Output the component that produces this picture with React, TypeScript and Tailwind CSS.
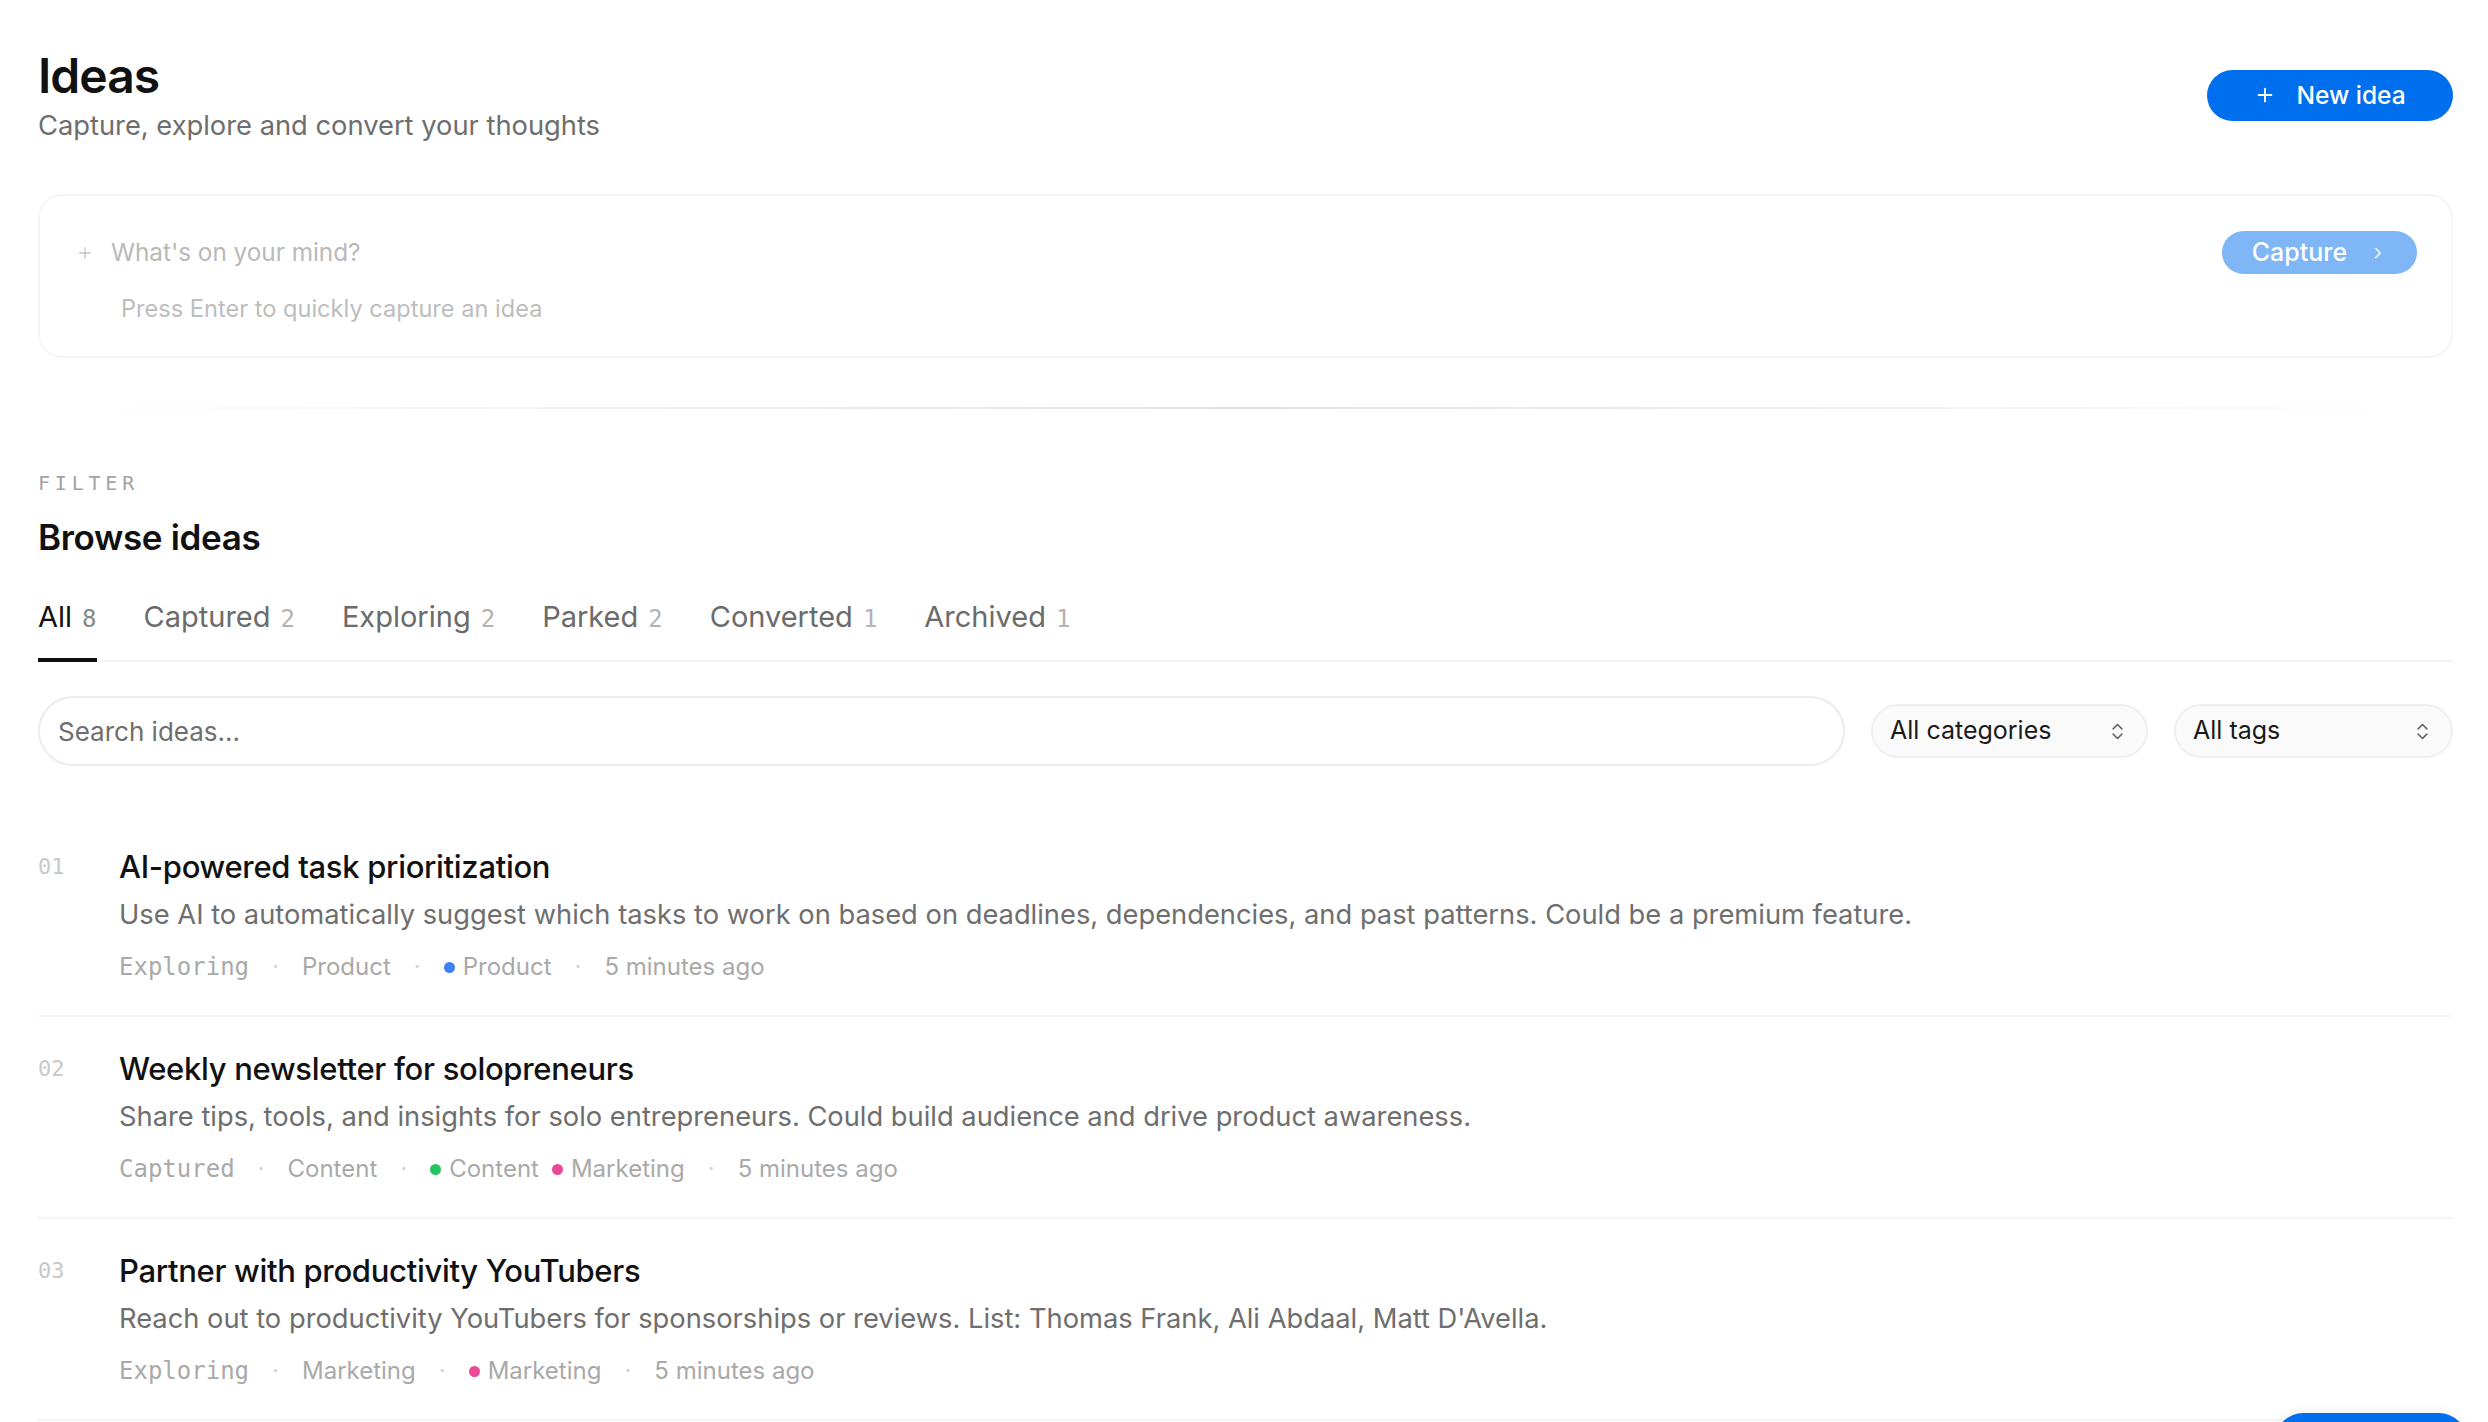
import { Plus, ChevronRight, ChevronsUpDown } from "lucide-react";

type Tag = { label: string; dot: string };

interface Idea {
  title: string;
  description: string;
  status: string;
  category: string;
  tags: Tag[];
  time: string;
}

const IDEAS: Idea[] = [
  {
    title: "AI-powered task prioritization",
    description:
      "Use AI to automatically suggest which tasks to work on based on deadlines, dependencies, and past patterns. Could be a premium feature.",
    status: "Exploring",
    category: "Product",
    tags: [{ label: "Product", dot: "bg-[#3b82f6]" }],
    time: "5 minutes ago",
  },
  {
    title: "Weekly newsletter for solopreneurs",
    description:
      "Share tips, tools, and insights for solo entrepreneurs. Could build audience and drive product awareness.",
    status: "Captured",
    category: "Content",
    tags: [
      { label: "Content", dot: "bg-[#22c55e]" },
      { label: "Marketing", dot: "bg-[#ec4899]" },
    ],
    time: "5 minutes ago",
  },
  {
    title: "Partner with productivity YouTubers",
    description:
      "Reach out to productivity YouTubers for sponsorships or reviews. List: Thomas Frank, Ali Abdaal, Matt D'Avella.",
    status: "Exploring",
    category: "Marketing",
    tags: [{ label: "Marketing", dot: "bg-[#ec4899]" }],
    time: "5 minutes ago",
  },
];

const TABS = [
  { label: "All", count: 8 },
  { label: "Captured", count: 2 },
  { label: "Exploring", count: 2 },
  { label: "Parked", count: 2 },
  { label: "Converted", count: 1 },
  { label: "Archived", count: 1 },
];

const mono = "font-['DejaVu_Sans_Mono','Liberation_Mono',monospace]";

function Sep() {
  return <span className="text-[#d4d4d4]">·</span>;
}

function IdeaRow({ idea, index }: { idea: Idea; index: number }) {
  return (
    <div className="flex border-b-2 border-[#f5f5f5] py-[32px]">
      <div className={`w-[81px] shrink-0 text-[22px] leading-[40px] text-[#c8c8c8] ${mono}`}>
        {String(index + 1).padStart(2, "0")}
      </div>
      <div className="min-w-0 flex-1">
        <h3 className="text-[31px] font-medium leading-[40px] tracking-[-0.01em] text-[#111]">{idea.title}</h3>
        <p className="mt-[10px] text-[27.3px] leading-[36px] text-[#6e6e6e]">{idea.description}</p>
        <div className="mt-[18px] flex items-center gap-[23px] text-[24px] leading-[32px] text-[#a9a9a9]">
          <span className={`text-[24px] ${mono}`}>{idea.status}</span>
          <Sep />
          <span>{idea.category}</span>
          <Sep />
          <span className="flex items-center gap-[13px]">
            {idea.tags.map((t) => (
              <span key={t.label} className="flex items-center gap-[8px]">
                <span className={`h-[11px] w-[11px] rounded-full ${t.dot}`} />
                {t.label}
              </span>
            ))}
          </span>
          <Sep />
          <span>{idea.time}</span>
        </div>
      </div>
    </div>
  );
}

export default function App() {
  return (
    <div className="min-h-screen bg-white pl-[38px] pr-[35px] pt-[48px] font-['Inter','Noto_Sans',sans-serif] text-[#111]">
      {/* Header */}
      <div className="flex items-center justify-between">
        <div>
          <h1 className="text-[48px] font-semibold leading-[56px] tracking-[-0.02em]">Ideas</h1>
          <p className="mt-[4px] text-[27.3px] leading-[36px] text-[#6e6e6e]">Capture, explore and convert your thoughts</p>
        </div>
        <button className="-mt-[2px] flex h-[51px] w-[246px] items-center justify-center gap-[20px] rounded-full bg-[#006fee] text-[24.5px] font-medium text-white">
          <Plus size={22} strokeWidth={2} />
          New idea
        </button>
      </div>

      {/* Quick capture */}
      <div className="mt-[50px] rounded-[24px] border-2 border-[#f5f5f5] pb-[33px] pl-[36px] pr-[34px] pt-[35px]">
        <div className="flex items-center">
          <Plus size={18} strokeWidth={1.8} className="text-[#c4c4c4]" />
          <span className="ml-[17px] flex-1 text-[24.3px] text-[#b9b9b9]">What's on your mind?</span>
          <button className="flex h-[43px] w-[195px] items-center justify-center gap-[22px] rounded-full bg-[#006fee] text-[25px] font-medium text-white opacity-50">
            Capture
            <ChevronRight size={18} strokeWidth={2} />
          </button>
        </div>
        <p className="ml-[45px] mt-[21px] text-[23.6px] leading-[28px] text-[#bdbdbd]">Press Enter to quickly capture an idea</p>
      </div>

      <div className="mt-[49px] h-[2px] bg-gradient-to-r from-transparent via-[#e2e2e2] to-transparent" />

      {/* Filter */}
      <div className={`mt-[62px] text-[20px] uppercase leading-[24px] tracking-[0.24em] text-[#a3a3a3] ${mono}`}>Filter</div>
      <h2 className="mt-[20px] text-[35px] font-semibold leading-[44px] tracking-[-0.01em]">Browse ideas</h2>

      <div className="mt-[40px] flex gap-[47px] border-b-2 border-[#f3f3f3]">
        {TABS.map((t, i) => (
          <div
            key={t.label}
            className={`-mb-[2px] flex items-baseline gap-[10px] border-b-[4px] pb-[21px] text-[29px] leading-[36px] ${
              i === 0 ? "border-[#111] text-[#111]" : "border-transparent text-[#6b6b6b]"
            }`}
          >
            {t.label}
            <span className={`text-[24px] ${i === 0 ? "text-[#888]" : "text-[#b3b3b3]"} ${mono}`}>{t.count}</span>
          </div>
        ))}
      </div>

      {/* Search & selects */}
      <div className="mt-[34px] flex items-center gap-[26px]">
        <div className="flex h-[70px] flex-1 items-center rounded-full border-2 border-[#ececec] pl-[18px] text-[26px] text-[#6e6e6e]">
          Search ideas...
        </div>
        <div className="flex h-[54px] w-[277px] items-center justify-between rounded-full border-2 border-[#efefef] bg-[#fafafa] pl-[17px] pr-[18px] text-[25px] text-[#1a1a1a]">
          All categories
          <ChevronsUpDown size={21} strokeWidth={1.8} className="text-[#666]" />
        </div>
        <div className="flex h-[54px] w-[279px] items-center justify-between rounded-full border-2 border-[#efefef] bg-[#fafafa] pl-[17px] pr-[18px] text-[25px] text-[#1a1a1a]">
          All tags
          <ChevronsUpDown size={21} strokeWidth={1.8} className="text-[#666]" />
        </div>
      </div>

      {/* List */}
      <div className="mt-[49px]">
        {IDEAS.map((idea, i) => (
          <IdeaRow key={idea.title} idea={idea} index={i} />
        ))}
      </div>

      {/* floating action, mostly below the fold */}
      <div className="fixed bottom-[-47px] right-[21px] h-[56px] w-[192px] rounded-full bg-[#006fee] shadow-[0_0_12px_rgba(0,0,0,0.08)]" />
    </div>
  );
}
